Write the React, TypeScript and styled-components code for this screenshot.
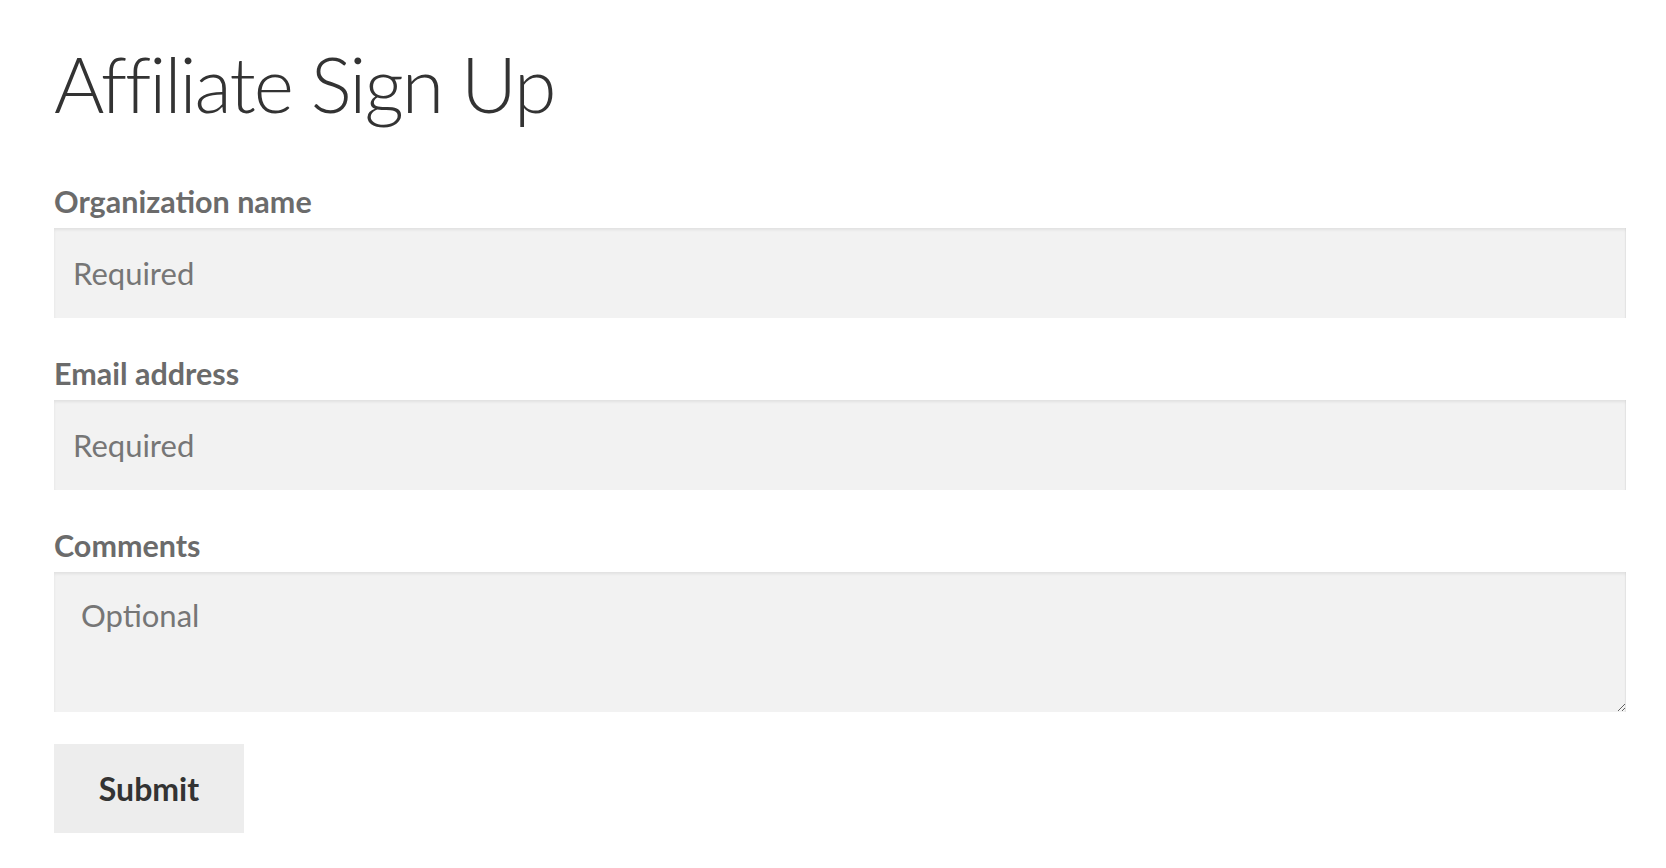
import React from "react";
import styled, { createGlobalStyle } from "styled-components";

const GlobalStyle = createGlobalStyle`
	html, body {
		margin: 0;
		padding: 0;
		background: #fff;
	}
	body {
		font-family: Lato, "Open Sans", "Liberation Sans", sans-serif;
	}
`;

const Page = styled.div`
	padding: 37px 40px 40px 54px;
`;

const Title = styled.h1`
	margin: 0 0 55px;
	font-size: 77px;
	line-height: 1.2;
	font-weight: 300;
	color: #333;
	letter-spacing: -2px;
`;

const Form = styled.form`
	display: flex;
	flex-direction: column;
`;

const Field = styled.div`
	display: flex;
	flex-direction: column;
	margin-bottom: 38px;

	&:last-of-type {
		margin-bottom: 32px;
	}
`;

const Label = styled.label`
	display: block;
	margin-bottom: 10px;
	font-size: 30.5px;
	line-height: 34px;
	font-weight: 700;
	color: #6b6b6b;
`;

const inputBase = `
	box-sizing: border-box;
	width: 100%;
	border: none;
	outline: none;
	background: #f2f2f2;
	box-shadow: inset 0 2px 3px rgba(0, 0, 0, 0.07), inset -1px 0 0 rgba(0, 0, 0, 0.03);
	font-family: Lato, "Open Sans", "Liberation Sans", sans-serif;
	font-size: 31px;
	color: #333;

	&::placeholder {
		color: #767676;
		opacity: 1;
	}
`;

const TextInput = styled.input`
	${inputBase}
	height: 90px;
	padding: 0 19px;
`;

const TextArea = styled.textarea`
	${inputBase}
	height: 140px;
	padding: 26px 27px;
	line-height: 34px;
	resize: vertical;
	display: block;
`;

const SubmitButton = styled.button`
	align-self: flex-start;
	width: 190px;
	height: 89px;
	border: none;
	background: #ededed;
	font-family: Lato, "Open Sans", "Liberation Sans", sans-serif;
	font-size: 32px;
	font-weight: 700;
	color: #333;
	cursor: pointer;
`;

export default function App() {
	return (
		<Page>
			<GlobalStyle />
			<Title>Affiliate Sign Up</Title>
			<Form onSubmit={(e) => e.preventDefault()}>
				<Field>
					<Label htmlFor="org">Organization name</Label>
					<TextInput id="org" type="text" placeholder="Required" />
				</Field>
				<Field>
					<Label htmlFor="email">Email address</Label>
					<TextInput id="email" type="email" placeholder="Required" />
				</Field>
				<Field>
					<Label htmlFor="comments">Comments</Label>
					<TextArea id="comments" placeholder="Optional" />
				</Field>
				<SubmitButton type="submit">Submit</SubmitButton>
			</Form>
		</Page>
	);
}
